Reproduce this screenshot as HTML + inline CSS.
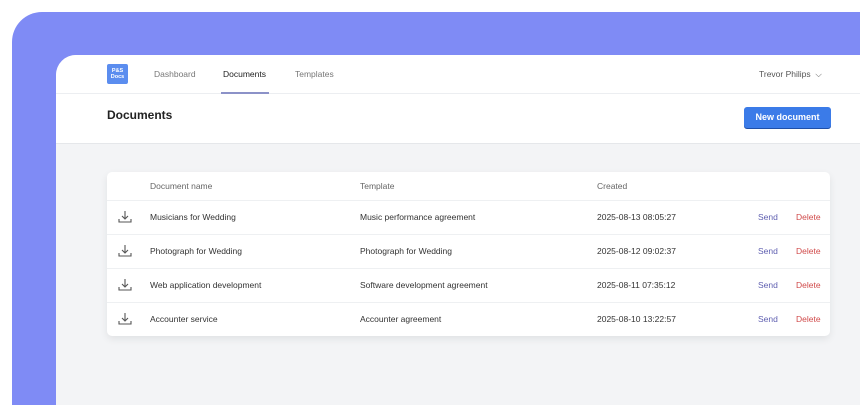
<!DOCTYPE html>
<html><head><style>
*{margin:0;padding:0;box-sizing:border-box}
html,body{width:860px;height:405px;overflow:hidden}
body{background:#fff;font-family:"Liberation Sans",sans-serif;position:relative}
.purple{position:absolute;left:12px;top:12px;width:848px;height:393px;background:#7f8bf5;border-radius:30px 0 0 0}
.panel{position:absolute;left:56px;top:55px;width:804px;height:350px;background:#f3f4f6;border-radius:20px 0 0 0;overflow:hidden}
.nav{position:absolute;left:0;top:0;width:100%;height:39px;background:#fff;border-bottom:1px solid #eceef1}
.logo{position:absolute;left:51px;top:9px;width:21px;height:20px;background:#5b8def;border-radius:2px;color:#fff;font-size:5.5px;font-weight:bold;text-align:center;line-height:6px;padding-top:4px}
.nl{position:absolute;top:14px;font-size:8.5px;color:#777}
.title{position:absolute;left:0;top:39px;width:100%;height:50px;background:#fff;border-bottom:1px solid #e5e7ea}
.btn{position:absolute;left:688px;top:13px;width:87px;height:21px;background:#3b7be8;border-radius:3px;color:#fff;font-size:9px;font-weight:bold;text-align:center;line-height:20px;box-shadow:0 1px 0 #1f4fa8}
.card{position:absolute;left:51px;top:117px;width:723px;height:164px;background:#fff;border-radius:5px;box-shadow:0 3px 8px rgba(0,0,0,.08)}
.row{position:absolute;left:0;width:100%;height:34px;border-top:1px solid #eef0f2;font-size:8.5px;color:#333}
.row span{position:absolute;top:11px}
.hd{font-size:8.5px;color:#666}
.send{color:#5f5fb0}.del{color:#d04a4a}
svg{position:absolute;left:11px;top:9px}
</style></head><body>
<div class="purple"></div>
<div class="panel">
 <div class="nav">
  <div class="logo">P&amp;S<br>Docs</div>
  <div class="nl" style="left:98px">Dashboard</div>
  <div class="nl" style="left:167px;color:#222">Documents</div>
  <div style="position:absolute;left:165px;top:37px;width:48px;height:2px;background:#8c92c8"></div>
  <div class="nl" style="left:239px">Templates</div>
  <div class="nl" style="left:703px;color:#555">Trevor Philips &nbsp;⌵</div>
 </div>
 <div class="title">
  <div style="position:absolute;left:51px;top:14px;font-size:12px;font-weight:bold;color:#222">Documents</div>
  <div class="btn">New document</div>
 </div>
 <div class="card">
  <div class="row hd" style="top:0;border:none;height:28px"><span style="left:43px;top:9px">Document name</span><span style="left:253px;top:9px">Template</span><span style="left:490px;top:9px">Created</span></div>
  <div class="row" style="top:28px"><svg width="14" height="14" viewBox="0 0 14 14" fill="none" stroke="#555" stroke-width="1.1"><path d="M7 1v8M4 6l3 3 3-3M1 9v3h12V9"/></svg><span style="left:43px">Musicians for Wedding</span><span style="left:253px">Music performance agreement</span><span style="left:490px">2025-08-13 08:05:27</span><span class="send" style="left:651px">Send</span><span class="del" style="left:689px">Delete</span></div>
  <div class="row" style="top:62px"><svg width="14" height="14" viewBox="0 0 14 14" fill="none" stroke="#555" stroke-width="1.1"><path d="M7 1v8M4 6l3 3 3-3M1 9v3h12V9"/></svg><span style="left:43px">Photograph for Wedding</span><span style="left:253px">Photograph for Wedding</span><span style="left:490px">2025-08-12 09:02:37</span><span class="send" style="left:651px">Send</span><span class="del" style="left:689px">Delete</span></div>
  <div class="row" style="top:96px"><svg width="14" height="14" viewBox="0 0 14 14" fill="none" stroke="#555" stroke-width="1.1"><path d="M7 1v8M4 6l3 3 3-3M1 9v3h12V9"/></svg><span style="left:43px">Web application development</span><span style="left:253px">Software development agreement</span><span style="left:490px">2025-08-11 07:35:12</span><span class="send" style="left:651px">Send</span><span class="del" style="left:689px">Delete</span></div>
  <div class="row" style="top:130px"><svg width="14" height="14" viewBox="0 0 14 14" fill="none" stroke="#555" stroke-width="1.1"><path d="M7 1v8M4 6l3 3 3-3M1 9v3h12V9"/></svg><span style="left:43px">Accounter service</span><span style="left:253px">Accounter agreement</span><span style="left:490px">2025-08-10 13:22:57</span><span class="send" style="left:651px">Send</span><span class="del" style="left:689px">Delete</span></div>
 </div>
</div>
</body></html>
